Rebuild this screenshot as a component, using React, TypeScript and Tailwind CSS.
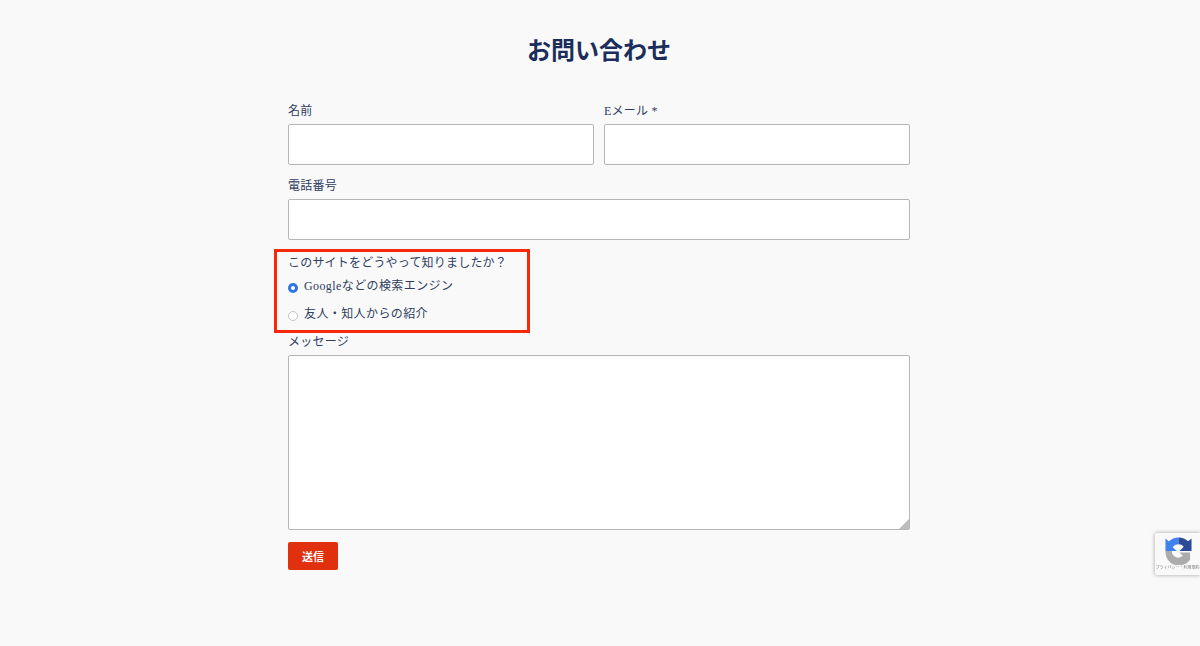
const textClass = "text-[12px] text-[#2f3d5f] [font-family:'Liberation_Serif','Noto_Sans_CJK_JP',serif]"

function Field({ label }: { label: string }) {
  return (
    <div className="flex min-w-0 flex-1 flex-col">
      <label className={`h-[25px] leading-[24px] tracking-[0.25px] ${textClass}`}>{label}</label>
      <input className="h-[41px] w-full rounded-[2px] border border-[#b6b6b6] bg-white" />
    </div>
  )
}

function Radio({ label, checked }: { label: string; checked?: boolean }) {
  return (
    <div className="flex h-[28px] items-center">
      {checked ? (
        <span className="mt-[3px] flex h-[10px] w-[10px] items-center justify-center rounded-full bg-[#2f74e8]">
          <span className="h-[4px] w-[4px] rounded-full bg-white" />
        </span>
      ) : (
        <span className="mt-[3px] h-[10px] w-[10px] rounded-full border border-[#c4c4c4] bg-white" />
      )}
      <span className={`ml-[6px] tracking-[0.4px] ${textClass}`}>{label}</span>
    </div>
  )
}

function RecaptchaBadge() {
  return (
    <div className="fixed bottom-[71px] right-0 flex h-[42px] w-[45px] flex-col items-center rounded-l-[2px] bg-[#f9f9f9] pt-[4px] shadow-[0_0_4px_rgba(0,0,0,0.35)]">
      <svg className="ml-[2px]" width="27" height="28" viewBox="0 0 28 28" fill="none">
        <path d="M14 0 A14 14 0 0 0 4 4.200 L0.500 1 L0.500 14 L12 14 L8 9.800 A7 7 0 0 1 14 7 Z" fill="#3f82f0" />
        <path d="M14 0 A14 14 0 0 1 24 4 L27.500 1 L27.500 14 L15 14 L19.500 9.500 A7 7 0 0 0 14 7 Z" fill="#2c4a97" />
        <path d="M0.500 14 L7 14 A7 7 0 0 0 14 21 A7 7 0 0 0 18.500 19 L15 15.500 L26 15.500 L26 23 A14 14 0 0 1 0.500 14 Z" fill="#acacac" />
      </svg>
      <span className="mt-[-1px] whitespace-nowrap text-[4px] leading-[6px] text-[#777] [font-family:'Noto_Sans_CJK_JP',sans-serif]">
        プライバシー・利用規約
      </span>
    </div>
  )
}

export default function App() {
  return (
    <div className="h-[646px] overflow-hidden bg-[#f9f9f9] pr-[2px]">
      <div className="mx-auto w-[622px] pt-[32px]">
        <h1 className="text-center text-[24px] leading-[34px] font-bold text-[#1b2d5b] [font-family:'Noto_Sans_CJK_JP',sans-serif]">
          お問い合わせ
        </h1>

        <div className="mt-[33px] flex gap-[10px]">
          <Field label="名前" />
          <Field label="Eメール *" />
        </div>

        <div className="mt-[9px] flex">
          <Field label="電話番号" />
        </div>

        <div className="relative mt-[9px] h-[84px] pt-[3px]">
          <p className={`h-[20px] leading-[22px] tracking-[0.2px] ${textClass}`}>
            このサイトをどうやって知りましたか？
          </p>
          <Radio label="Googleなどの検索エンジン" checked />
          <Radio label="友人・知人からの紹介" />
          <div className="absolute top-0 left-[-14px] h-[84px] w-[256px] border-[3px] border-[#f7290a]" />
        </div>

        <div className="mt-[-3px] flex">
          <div className="flex min-w-0 flex-1 flex-col">
            <label className={`h-[25px] pt-[2px] leading-[21px] tracking-[0.25px] ${textClass}`}>
              メッセージ
            </label>
            <div className="relative">
              <textarea className="block h-[175px] w-full resize-none rounded-[2px] border border-[#b6b6b6] bg-white" />
              <svg className="absolute right-[1px] bottom-[1px]" width="10" height="10" viewBox="0 0 10 10">
                <path d="M10 0 L10 10 L0 10 Z" fill="#bcbcbc" />
              </svg>
            </div>
          </div>
        </div>

        <button className="mt-[12px] block h-[28px] w-[50px] rounded-[2px] bg-[#e1300d] text-[11px] font-bold text-white [font-family:'Noto_Sans_CJK_JP',sans-serif]">
          送信
        </button>
      </div>
      <RecaptchaBadge />
    </div>
  )
}
